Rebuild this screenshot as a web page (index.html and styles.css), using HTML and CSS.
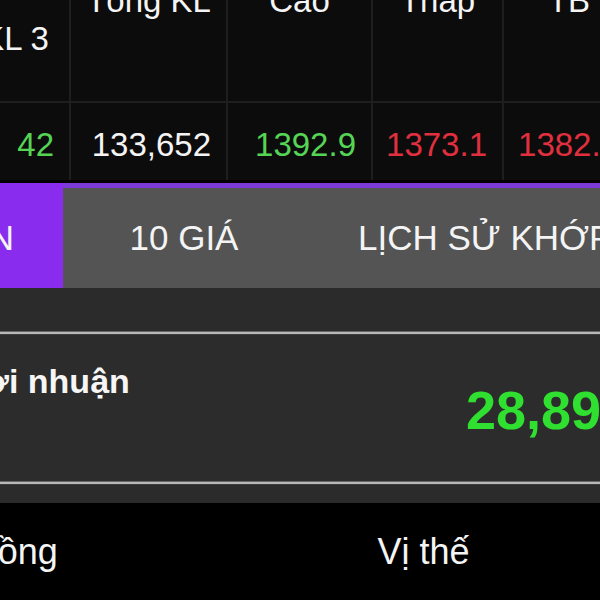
FILE: index.html
```html
<!DOCTYPE html>
<html lang="vi">
<head>
    <meta charset="UTF-8">
    <meta name="viewport" content="width=device-width, initial-scale=1.0">
    <title>Phái sinh</title>
    <link rel="stylesheet" href="styles.css">
</head>
<body>
    <div class="screen">
        <div class="quote-table">
            <div class="head head-low">KL 3</div>
            <div class="head">Tổng KL</div>
            <div class="head">Cao</div>
            <div class="head">Thấp</div>
            <div class="head">TB</div>

            <div class="cell up">42</div>
            <div class="cell">133,652</div>
            <div class="cell up">1392.9</div>
            <div class="cell down">1373.1</div>
            <div class="cell down">1382.8</div>
        </div>

        <div class="tabs">
            <div class="tab tab-first active">TỔNG QUAN</div>
            <div class="tab tab-second">10 GIÁ</div>
            <div class="tab tab-third">LỊCH SỬ KHỚP LỆNH</div>
        </div>

        <div class="summary">
            <div class="rule"></div>
            <div class="profit">
                <div class="profit-label">Lợi nhuận</div>
                <div class="profit-value">28,895,000</div>
            </div>
            <div class="rule"></div>
        </div>

        <div class="bottom-nav">
            <div class="nav-item">Hợp đồng</div>
            <div class="nav-item">Vị thế</div>
        </div>
    </div>
</body>
</html>
```

FILE: styles.css
```css
body {
    margin: 0;
    background-color: #000;
    font-family: "Liberation Sans", Arial, sans-serif;
    color: #f4f4f4;
    overflow: hidden;
}

.screen {
    margin: -30px 0 0 -38px;
    width: 1200px;
}

/* bang gia */
.quote-table {
    display: grid;
    grid-template-columns: 107px 155px 143px 129px 130px;
    grid-template-rows: 131px 77px;
    gap: 2px;
    width: 672px;
    background-color: #1f1e1e;
}
.head {
    background-color: #0d0c0c;
    padding-top: 12px;
    font-size: 33px;
    line-height: 38px;
    text-align: center;
    color: #f4f4f4;
}
.head-low {
    padding-top: 50px;
}
.cell {
    background-color: #0d0c0c;
    padding: 6px 15px 0 0;
    font-size: 33px;
    line-height: 71px;
    text-align: right;
    color: #f4f4f4;
}
.up {
    color: #55d455;
}
.down {
    color: #e0303f;
}

/* tabs */
.tabs {
    display: flex;
    margin-top: 3px;
    height: 100px;
    border-top: 5px solid #7c3ad8;
    background-color: #545454;
    font-size: 35px;
    line-height: 100px;
    white-space: nowrap;
}
.tab {
    color: #f4f4f4;
}
.tab.active {
    background-color: #8a2cee;
    margin-top: -5px;
    padding-top: 5px;
}
.tab-first {
    padding: 0 49px 0 0;
    width: 52px;
    overflow: hidden;
    direction: rtl;
}
.tab-second {
    width: 242px;
    text-align: center;
}
.tab-third {
    padding-left: 53px;
}

/* loi nhuan */
.summary {
    background-color: #2b2b2b;
    padding: 43px 0 18px;
}
.rule {
    height: 2px;
    background-color: #b8b8b8;
    border-top: 1px solid #666;
    border-bottom: 1px solid #3c3c3c;
}
.profit {
    display: grid;
    grid-template-columns: 504px auto;
    height: 146px;
    background-color: #2c2c2c;
}
.profit-label {
    padding: 27px 0 0 2px;
    font-size: 34px;
    line-height: 38px;
    font-weight: bold;
    color: #f6f6f6;
}
.profit-value {
    margin-top: 45px;
    font-size: 54px;
    line-height: 60px;
    font-weight: bold;
    color: #30e030;
}

/* menu duoi */
.bottom-nav {
    display: grid;
    grid-template-columns: 428px 463px 463px;
    margin-left: -198px;
    padding-top: 28px;
    background-color: #000;
}
.nav-item {
    font-size: 36px;
    line-height: 42px;
    text-align: center;
    color: #f4f4f4;
}
```
